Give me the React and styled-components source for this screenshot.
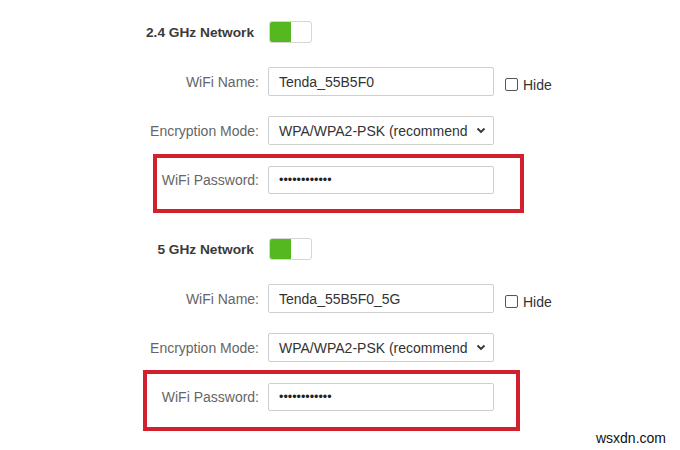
import styled, { createGlobalStyle } from "styled-components";

const GlobalStyle = createGlobalStyle`
  html, body {
    margin: 0;
    padding: 0;
    background: #ffffff;
  }
  body {
    font-family: "Liberation Sans", Arial, sans-serif;
  }
`;

const Page = styled.div`
  position: relative;
  width: 680px;
  height: 450px;
  padding-top: 21px;
  box-sizing: border-box;
  background: #fff;
  overflow: hidden;
`;

const NetworkHeader = styled.div`
  display: flex;
  align-items: center;
  height: 22px;
  margin-top: ${(p) => p.$mt || 0}px;
`;

const NetworkLabel = styled.div`
  width: 254px;
  text-align: right;
  font-size: 13.7px;
  font-weight: 700;
  color: #3a3a3a;
`;

const Toggle = styled.div`
  margin-left: 15px;
  width: 43px;
  height: 22px;
  box-sizing: border-box;
  border: 1px solid #d6d6d6;
  border-radius: 3px;
  background: #fff;
  display: flex;
  overflow: hidden;
  span {
    width: 21px;
    height: 100%;
    background: #56b821;
  }
`;

const Row = styled.div`
  display: flex;
  align-items: center;
  margin-top: ${(p) => p.$mt || 0}px;
`;

const Label = styled.label`
  width: ${(p) => p.$width || 268}px;
  padding-right: 9px;
  box-sizing: border-box;
  text-align: right;
  font-size: 14px;
  color: #666;
  white-space: nowrap;
`;

const Field = styled.div`
  width: 226px;
  height: ${(p) => p.$h || 29}px;
  box-sizing: border-box;
  border: 1px solid #cfcfcf;
  border-radius: 2px;
  padding: 0 ${(p) => p.$pr || 10}px 0 10px;
  display: flex;
  align-items: center;
  font-size: 14px;
  color: #333;
  background: #fff;
`;

const Dots = styled.span`
  font-size: 12.5px;
  color: #222;
  line-height: 1;
`;

const SelectText = styled.span`
  flex: 1;
  white-space: nowrap;
`;

const Chevron = () => (
  <svg width="10" height="7" viewBox="0 0 10 7">
    <path d="M1.5 1.5 L5 5 L8.5 1.5" fill="none" stroke="#333" strokeWidth="1.8" />
  </svg>
);

const HideBox = styled.div`
  display: flex;
  align-items: center;
  margin-left: 11px;
  margin-top: 6px;
  font-size: 14px;
  color: #333;
  span.box {
    width: 11px;
    height: 11px;
    border: 1px solid #555;
    border-radius: 2px;
    margin-right: 5px;
  }
`;

const Highlight = styled.div`
  margin-top: ${(p) => p.$mt}px;
  margin-left: ${(p) => p.$left}px;
  width: ${(p) => p.$right - p.$left}px;
  box-sizing: border-box;
  border: 4px solid #d2202e;
  padding: ${(p) => p.$pt}px 0 ${(p) => p.$pb}px;
`;

const Watermark = styled.div`
  position: absolute;
  right: 14px;
  bottom: 4px;
  font-size: 14px;
  color: #111;
`;

const Network = ({ title, ssid, box, first }) => (
  <>
    <NetworkHeader $mt={first ? 0 : 25}>
      <NetworkLabel>{title}</NetworkLabel>
      <Toggle>
        <span />
      </Toggle>
    </NetworkHeader>
    <Row $mt={24}>
      <Label>WiFi Name:</Label>
      <Field>{ssid}</Field>
      <HideBox>
        <span className="box" />
        Hide
      </HideBox>
    </Row>
    <Row $mt={20}>
      <Label>Encryption Mode:</Label>
      <Field $pr={7}>
        <SelectText>WPA/WPA2-PSK (recommend</SelectText>
        <Chevron />
      </Field>
    </Row>
    <Highlight {...box}>
      <Row>
        <Label $width={268 - box.$left - 4}>WiFi Password:</Label>
        <Field $h={28}>
          <Dots>••••••••••••</Dots>
        </Field>
      </Row>
    </Highlight>
  </>
);

export default function App() {
  return (
    <>
      <GlobalStyle />
      <Page>
        <Network
          first
          title="2.4 GHz Network"
          ssid="Tenda_55B5F0"
          box={{ $mt: 9, $left: 153, $right: 524, $pt: 8, $pb: 15 }}
        />
        <Network
          title="5 GHz Network"
          ssid="Tenda_55B5F0_5G"
          box={{ $mt: 8, $left: 143, $right: 520, $pt: 9, $pb: 16 }}
        />
        <Watermark>wsxdn.com</Watermark>
      </Page>
    </>
  );
}
